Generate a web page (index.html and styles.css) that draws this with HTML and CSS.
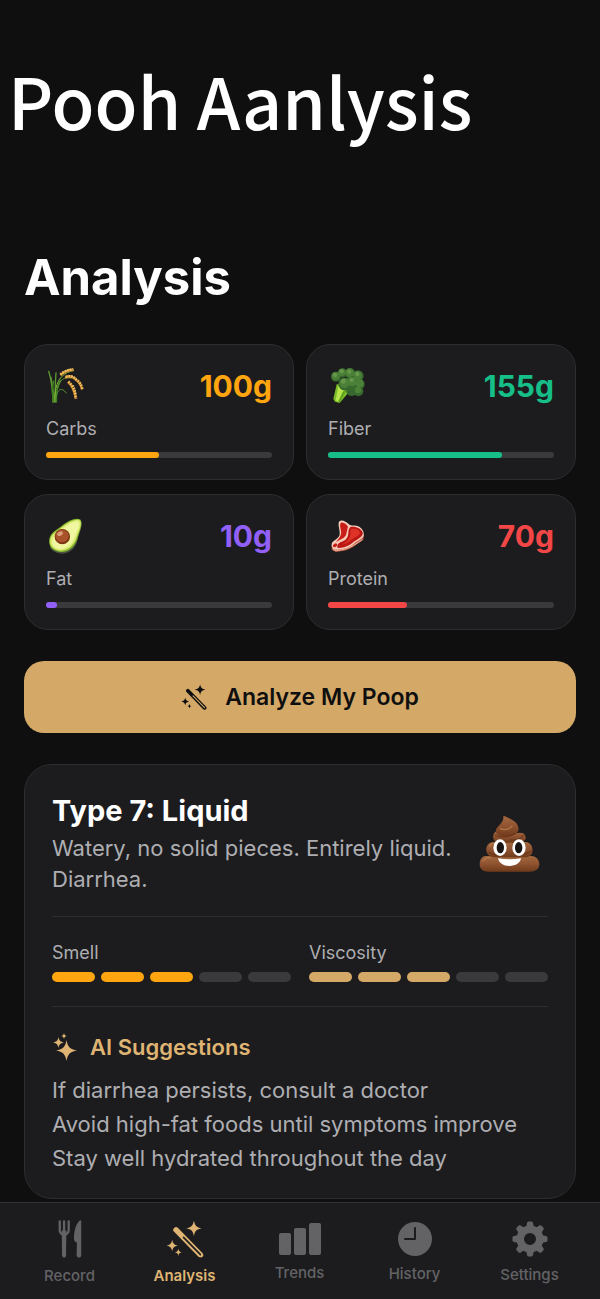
FILE: index.html
```
<!DOCTYPE html>
<html lang="en">
<head>
  <meta charset="UTF-8">
  <meta name="viewport" content="width=device-width, initial-scale=1.0">
  <title>Pooh Aanlysis</title>
  <link rel="stylesheet" href="styles.css">
</head>
<body>
  <!-- shared icons -->
  <svg class="sprite" aria-hidden="true">
    <symbol id="star" viewBox="-10 -10 20 20">
      <path d="M0-10C1.2-3.4 3.4-1.2 10 0C3.4 1.2 1.2 3.4 0 10C-1.2 3.4-3.4 1.2-10 0C-3.4-1.2-1.2-3.4 0-10Z"/>
    </symbol>
    <symbol id="wand" viewBox="492 75 117 116">
      <mask id="wand-slot" maskUnits="userSpaceOnUse" x="492" y="75" width="117" height="116">
        <rect x="492" y="75" width="117" height="116" fill="#fff"/>
        <path d="M546 128l52 53" stroke="#000" stroke-width="5" stroke-linecap="round"/>
      </mask>
      <path d="M523 105l75 77" stroke="currentColor" stroke-width="17" stroke-linecap="round" mask="url(#wand-slot)"/>
      <use href="#star" x="554" y="76" width="48" height="48"/>
      <use href="#star" x="493" y="135" width="36" height="36"/>
      <use href="#star" x="519" y="163" width="22" height="22"/>
    </symbol>
  </svg>

  <main>
    <p class="banner">Pooh Aanlysis</p>
    <h1>Analysis</h1>

    <section class="nutrients">
      <div class="nutrient carbs">
        <div class="nutrient-top">
          <svg width="38" height="38" viewBox="78 80 114 114" fill="none" aria-hidden="true">
            <g fill="none" stroke-linecap="round">
              <path d="M99 186C98 154 96 122 86 93M107 185C104 156 106 124 108 98M104 176C98 142 94 124 93 111" stroke="#5c9a30" stroke-width="4"/>
              <path d="M101 185C97 162 97 140 100 123M109 184C108 158 112 137 121 121" stroke="#3f7d22" stroke-width="5"/>
              <path d="M104 185C105 154 107 128 125 109C135 99 148 92 161 91" stroke="#86b83d" stroke-width="3"/>
              <path d="M108 170C113 148 124 138 139 158M113 143C119 118 133 109 151 113" stroke="#5c9a30" stroke-width="3"/>
            </g>
            <g fill="none">
              <path d="M121 105Q137 91 161 89M135 112Q157 106 167 119Q181 128 186 148M143 125Q161 140 167 176" stroke="#a96d25" stroke-width="6"/>
              <path d="M121 103Q137 89 160 87M136 110Q158 104 168 117Q183 127 187 147M145 124Q163 138 168 175" stroke="#efb653" stroke-width="8" stroke-dasharray="6 2"/>
              <path d="M126 99Q139 89 157 86M140 107Q157 103 170 118M160 134Q168 148 168 164" stroke="#ffda83" stroke-width="3" stroke-dasharray="4 4"/>
            </g>
          </svg>
          <strong>100g</strong>
        </div>
        <span class="nutrient-name">Carbs</span>
        <div class="track"><div class="fill" style="width: 50%"></div></div>
      </div>

      <div class="nutrient fiber">
        <div class="nutrient-top">
          <svg width="38" height="38" viewBox="82 80 114 114" aria-hidden="true">
            <path d="M108 132L98 176L103 184L117 188L143 157L158 145L140 130Z" fill="#79bb28"/>
            <path d="M113 137L105 180L112 184L129 148L146 143Z" fill="#b7e44b"/>
            <path d="M116 186L128 158L142 146" fill="none" stroke="#5c991f" stroke-width="4"/>
            <g fill="#37682d">
              <circle cx="106" cy="109" r="15"/><circle cx="125" cy="98" r="14"/>
              <circle cx="148" cy="99" r="16"/><circle cx="172" cy="107" r="17"/>
              <circle cx="177" cy="132" r="15"/><circle cx="173" cy="153" r="15"/>
              <circle cx="153" cy="151" r="16"/><circle cx="154" cy="128" r="19"/>
              <circle cx="132" cy="131" r="19"/>
            </g>
            <g fill="#4b8038">
              <circle cx="105" cy="107" r="12"/><circle cx="124" cy="96" r="11"/>
              <circle cx="147" cy="97" r="13"/><circle cx="171" cy="105" r="13"/>
              <circle cx="177" cy="129" r="12"/><circle cx="172" cy="149" r="10"/>
              <circle cx="154" cy="124" r="14"/><circle cx="131" cy="128" r="15"/>
            </g>
            <g fill="#67984c">
              <circle cx="103" cy="104" r="6"/><circle cx="123" cy="93" r="6"/>
              <circle cx="146" cy="94" r="6"/><circle cx="170" cy="101" r="6"/>
              <circle cx="153" cy="119" r="6"/><circle cx="128" cy="123" r="7"/>
            </g>
          </svg>
          <strong>155g</strong>
        </div>
        <span class="nutrient-name">Fiber</span>
        <div class="track"><div class="fill" style="width: 77%"></div></div>
      </div>

      <div class="nutrient fat">
        <div class="nutrient-top">
          <svg width="38" height="38" viewBox="78 80 114 114" aria-hidden="true">
            <path d="M182 91C190 107 178 126 173 147C168 174 149 191 125 190C108 189 95 181 90 171L124 112Z" fill="#4a5141"/>
            <path d="M180 87C190 95 181 118 174 139C168 166 147 187 121 185C97 182 84 167 88 146C92 126 108 120 122 109C139 94 164 80 180 87Z" fill="#86b62c"/>
            <path d="M178 89C188 97 179 118 171 138C164 163 145 182 121 181C99 179 87 165 91 147C95 129 111 123 124 112C141 98 164 84 178 89Z" fill="#dcec72"/>
            <path d="M175 94C183 102 173 119 165 138C158 160 141 176 122 176C104 175 94 164 97 150C102 133 116 127 128 116C143 103 164 90 175 94Z" fill="#f1f7a0"/>
            <ellipse cx="127" cy="139" rx="23" ry="23" fill="#7b3412"/>
            <ellipse cx="126" cy="137" rx="20" ry="19" fill="#a9532b"/>
            <ellipse cx="120" cy="130" rx="9" ry="6" fill="#dba07a" transform="rotate(-28 120 130)"/>
          </svg>
          <strong>10g</strong>
        </div>
        <span class="nutrient-name">Fat</span>
        <div class="track"><div class="fill" style="width: 5%"></div></div>
      </div>

      <div class="nutrient protein">
        <div class="nutrient-top">
          <svg width="38" height="38" viewBox="82 80 114 114" aria-hidden="true">
            <path d="M94 164L93 177L105 185L130 181C148 178 166 164 188 148L190 132L145 143Z" fill="#b85a43"/>
            <path d="M116 93C123 86 137 94 144 101C150 107 156 105 167 106C182 109 192 122 189 137C184 147 170 151 160 160C145 173 129 177 107 178C96 178 90 169 94 158C98 149 110 147 116 136C121 126 109 102 116 93Z" fill="#f5cbb9"/>
            <path d="M121 97C128 94 138 102 142 109L136 134C132 143 119 148 106 155C114 145 124 135 121 121C119 111 116 102 121 97Z" fill="#c91e18"/>
            <path d="M149 110C163 106 182 114 186 126C189 141 168 147 155 158C142 168 128 173 111 173C109 166 111 159 121 155C138 150 142 140 143 128C143 121 145 114 149 110Z" fill="#bc1714"/>
            <path d="M152 116C166 113 177 120 178 127C176 137 161 140 149 151C141 158 133 160 124 163C138 155 148 147 149 132C150 124 148 119 152 116Z" fill="#dd3427"/>
            <ellipse cx="103" cy="165" rx="7" ry="5" fill="#c91e18" transform="rotate(-30 103 165)"/>
            <path d="M96 178L108 181L131 177C149 173 167 160 185 148" fill="none" stroke="#f0b29b" stroke-width="3"/>
          </svg>
          <strong>70g</strong>
        </div>
        <span class="nutrient-name">Protein</span>
        <div class="track"><div class="fill" style="width: 35%"></div></div>
      </div>
    </section>

    <button class="analyze" type="button">
      <svg width="26" height="26" aria-hidden="true"><use href="#wand"/></svg>
      Analyze My Poop
    </button>

    <article class="result">
      <div class="result-top">
        <div>
          <h2>Type 7: Liquid</h2>
          <p>Watery, no solid pieces. Entirely liquid. Diarrhea.</p>
        </div>
        <svg width="70" height="60" viewBox="114 162 210 180" aria-hidden="true">
          <defs>
            <linearGradient id="brown" x1="0" y1="0" x2="0" y2="1">
              <stop offset="0" stop-color="#a4693f"/>
              <stop offset=".5" stop-color="#8f5330"/>
              <stop offset="1" stop-color="#6f3a1a"/>
            </linearGradient>
          </defs>
          <path d="M140 288C121 286 117 309 120 320C124 332 137 336 154 335L269 335C287 335 299 326 298 311C297 298 288 289 275 288Z" fill="url(#brown)"/>
          <path d="M158 246C141 249 135 266 141 278C146 291 160 292 174 292L253 292C274 293 281 278 276 262C274 251 264 246 255 246Z" fill="url(#brown)"/>
          <path d="M178 211C161 213 156 229 162 241C168 250 185 249 199 248L235 248C251 248 261 239 256 228C252 218 244 218 234 219Z" fill="url(#brown)"/>
          <path d="M190 167C192 184 181 191 171 203C164 212 167 224 181 228C198 232 219 229 230 219C241 209 235 193 223 184C211 176 202 171 190 167Z" fill="url(#brown)"/>
          <path d="M166 226C182 237 212 230 227 220M147 276C165 291 184 285 197 279M222 280C242 288 262 281 273 273M211 240C232 242 246 234 250 226" fill="none" stroke="#643218" stroke-width="3" stroke-linecap="round"/>
          <path d="M181 206C196 213 211 206 216 198M130 303Q135 292 151 294M149 259Q153 250 160 250" fill="none" stroke="#b5764b" stroke-width="4" stroke-linecap="round"/>
          <ellipse cx="180" cy="263" rx="20" ry="25" fill="#fff"/>
          <ellipse cx="237" cy="263" rx="20" ry="25" fill="#fff"/>
          <ellipse cx="181" cy="263" rx="11" ry="17" fill="#171312"/>
          <ellipse cx="236" cy="263" rx="11" ry="17" fill="#171312"/>
          <path d="M174 295Q208 301 243 295C242 308 227 318 208 318C190 318 177 309 174 295Z" fill="#fff"/>
        </svg>
      </div>

      <div class="ratings">
        <div class="rating smell">
          <span>Smell</span>
          <div class="segments"><i class="on"></i><i class="on"></i><i class="on"></i><i></i><i></i></div>
        </div>
        <div class="rating viscosity">
          <span>Viscosity</span>
          <div class="segments"><i class="on"></i><i class="on"></i><i class="on"></i><i></i><i></i></div>
        </div>
      </div>

      <div class="suggestions">
        <h3>
          <svg width="26" height="28" viewBox="52 1033 26 28" aria-hidden="true">
            <use href="#star" x="56" y="1040" width="21" height="21"/>
            <use href="#star" x="53" y="1037" width="11" height="11"/>
            <use href="#star" x="61" y="1033" width="6" height="6"/>
          </svg>
          AI Suggestions
        </h3>
        <ul>
          <li>If diarrhea persists, consult a doctor</li>
          <li>Avoid high-fat foods until symptoms improve</li>
          <li>Stay well hydrated throughout the day</li>
        </ul>
      </div>
    </article>
  </main>

  <nav class="tabs">
    <a href="#record">
      <svg width="26" height="38" viewBox="172 75 78 115" aria-hidden="true">
        <path d="M180 79V106Q180 116 193 121Q207 116 207 106V79M193 79V184" fill="none" stroke="currentColor" stroke-width="7" stroke-linecap="round"/>
        <path d="M186 107H200L199 184Q193 194 187 184Z"/>
        <path d="M245 79Q245 74 240 77C229 86 223 109 223 131Q223 141 232 143L231 182Q232 189 238 189Q245 189 245 182Z"/>
      </svg>
      Record
    </a>
    <a href="#analysis" class="current" aria-current="page">
      <svg width="38" height="38" aria-hidden="true"><use href="#wand"/></svg>
      Analysis
    </a>
    <a href="#trends">
      <svg width="42" height="32" viewBox="0 0 42 32" aria-hidden="true">
        <rect x="0" y="10" width="12" height="22" rx="2"/>
        <rect x="15" y="5" width="12" height="27" rx="2"/>
        <rect x="30" y="0" width="12" height="32" rx="2"/>
      </svg>
      Trends
    </a>
    <a href="#history">
      <svg width="34" height="34" viewBox="0 0 34 34" aria-hidden="true">
        <circle cx="17" cy="17" r="17"/>
        <path class="hands" d="M17 6V17H7" fill="none" stroke-width="2" stroke-linecap="round" stroke-linejoin="round"/>
      </svg>
      History
    </a>
    <a href="#settings">
      <svg width="36" height="36" viewBox="-18 -18 36 36" aria-hidden="true">
        <defs><path id="tooth" d="M-4-11L-3-16Q-2.7-17.5-1.5-17.5H1.500Q2.7-17.5 3-16L4-11Z"/></defs>
        <path fill-rule="evenodd" d="M0-13.5A13.5 13.5 0 1 1 0 13.5A13.5 13.5 0 1 1 0-13.5ZM0-6A6 6 0 1 0 0 6A6 6 0 1 0 0-6Z"/>
        <use href="#tooth"/>
        <use href="#tooth" transform="rotate(45)"/>
        <use href="#tooth" transform="rotate(90)"/>
        <use href="#tooth" transform="rotate(135)"/>
        <use href="#tooth" transform="rotate(180)"/>
        <use href="#tooth" transform="rotate(225)"/>
        <use href="#tooth" transform="rotate(270)"/>
        <use href="#tooth" transform="rotate(315)"/>
      </svg>
      Settings
    </a>
  </nav>
</body>
</html>
```
FILE: styles.css
```
* {
  box-sizing: border-box;
}
body {
  margin: 0;
  min-height: 100vh;
  display: flex;
  flex-direction: column;
  background: #0f0f0f;
  color: #fff;
  font-family: Inter, "Liberation Sans", sans-serif;
}
h1, h2, h3, p, ul {
  margin: 0;
  padding: 0;
}
svg {
  flex: none;
  fill: currentColor;
}
.sprite {
  position: absolute;
  width: 0;
  height: 0;
}
main {
  flex: 1;
  padding: 0 24px 3px;
}
.banner {
  margin: 50px 0 0 -16px;
  font-family: "Noto Sans CJK SC", "Noto Sans", sans-serif;
  font-size: 70px;
  font-weight: 500;
  line-height: 100px;
  white-space: nowrap;
}
h1 {
  margin-top: 98px;
  font-size: 49px;
  font-weight: 700;
  line-height: 60px;
}

/* nutrient cards */
.nutrients {
  display: grid;
  grid-template-columns: 1fr 1fr;
  gap: 14px 12px;
  margin-top: 36px;
}
.nutrient {
  padding: 21px;
  background: #1c1c1e;
  border: 1px solid #2d2d2f;
  border-radius: 24px;
}
.nutrient-top {
  display: flex;
  align-items: center;
  justify-content: space-between;
  height: 40px;
}
.nutrient strong {
  font-size: 30px;
  font-weight: 700;
}
.nutrient-name {
  display: block;
  margin: 12px 0;
  color: #aeaeb2;
  font-size: 18px;
  line-height: 22px;
}
.track {
  height: 6px;
  background: #3a3a3c;
  border-radius: 3px;
}
.fill {
  height: 6px;
  background: currentColor;
  border-radius: 3px;
}
.carbs {
  color: #ffa50f;
}
.fiber {
  color: #16bf88;
}
.fat {
  color: #9260f7;
}
.protein {
  color: #f34747;
}

.analyze {
  display: flex;
  align-items: center;
  justify-content: center;
  gap: 18px;
  width: 100%;
  height: 72px;
  margin: 31px 0;
  border: 0;
  border-radius: 20px;
  background: #d4a968;
  color: #0f0f0f;
  font-family: inherit;
  font-size: 23px;
  font-weight: 600;
}

/* result card */
.result {
  padding: 28px 27px 23px;
  background: #1c1c1e;
  border: 1px solid #2d2d2f;
  border-radius: 28px;
}
.result-top {
  display: flex;
  align-items: center;
  justify-content: space-between;
}
h2 {
  font-size: 29px;
  font-weight: 700;
  line-height: 36px;
}
.result-top p {
  margin-top: 4px;
  color: #aeaeb2;
  font-size: 22px;
  line-height: 31px;
}
.ratings {
  display: grid;
  grid-template-columns: 1fr 1fr;
  gap: 18px;
  margin: 21px 0 25px;
  padding: 24px 0;
  border: solid #2d2d2f;
  border-width: 1px 0;
}
.rating span {
  color: #aeaeb2;
  font-size: 18px;
  line-height: 24px;
}
.segments {
  display: flex;
  gap: 6px;
  margin-top: 7px;
}
.segments i {
  flex: 1;
  height: 10px;
  background: #3a3a3c;
  border-radius: 5px;
}
.smell .on {
  background: #ffa50f;
}
.viscosity .on {
  background: #d4a968;
}
h3 {
  display: flex;
  align-items: center;
  gap: 12px;
  color: #dfb473;
  font-size: 22px;
  font-weight: 600;
  line-height: 30px;
}
.suggestions ul {
  margin-top: 11px;
  list-style: none;
  color: #aeaeb2;
  font-size: 22px;
  line-height: 34px;
}

/* bottom tab bar */
.tabs {
  display: flex;
  height: 97px;
  padding: 3px 13px 0 12px;
  background: #1c1c1e;
  border-top: 1px solid #323234;
}
.tabs a {
  flex: 1;
  display: flex;
  flex-direction: column;
  align-items: center;
  justify-content: center;
  gap: 9px;
  color: #636366;
  font-size: 15px;
  font-weight: 500;
  line-height: 18px;
  text-decoration: none;
}
.tabs .current {
  color: #dfb473;
  font-weight: 600;
}
.hands {
  stroke: #1c1c1e;
}
```
